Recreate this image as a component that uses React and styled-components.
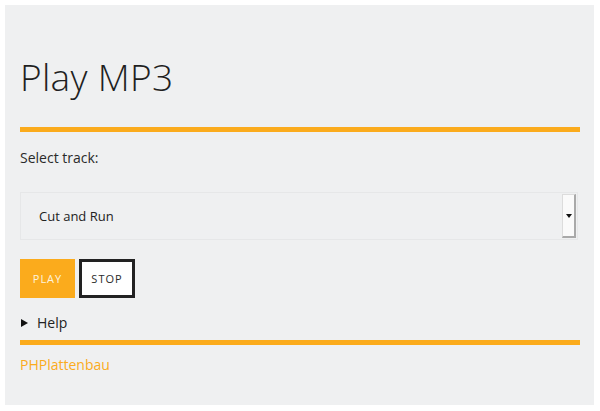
import React from 'react'
import styled, { createGlobalStyle } from 'styled-components'

const GlobalStyle = createGlobalStyle`
body{
  margin: 0;
  background: #ffffff;
  font-family: 'Open Sans', 'Noto Sans', sans-serif;
  color: #222;
}
`

const Page = styled.div`
padding: 5px 6px 6px 5px;
`

const Panel = styled.div`
background: #eff0f1;
height: 400px;
box-sizing: border-box;
padding: 44px 14px 0 15px;
display: flex;
flex-direction: column;
`

const Title = styled.h1`
margin: 0;
font-size: 37px;
font-weight: 300;
line-height: 56px;
color: #1f1f1f;
letter-spacing: 0.3px;
`

const Rule = styled.div`
height: 5px;
background: #fbab1c;
margin-top: ${props => props.top}px;
`

const Label = styled.div`
margin-top: 16px;
font-size: 14px;
line-height: 20px;
color: #2a2a2a;
`

const SelectBox = styled.div`
margin-top: 24px;
margin-right: 2px;
height: 48px;
box-sizing: border-box;
border: 1px solid #e6e7e8;
display: flex;
align-items: center;
padding: 0 1px 0 18px;
`

const SelectText = styled.span`
flex: 1;
font-size: 13px;
color: #222;
`

const ArrowBox = styled.span`
width: 14px;
height: 44px;
box-sizing: border-box;
background: #fafafa;
border: 1px solid #dcdcdc;
border-right: 2px solid #a9a9a9;
border-bottom: 2px solid #a9a9a9;
display: flex;
align-items: center;
justify-content: center;
`

const Arrow = styled.span`
width: 0;
height: 0;
border-left: 3px solid transparent;
border-right: 3px solid transparent;
border-top: 4px solid #111;
`

const Buttons = styled.div`
display: flex;
gap: 4px;
margin-top: 19px;
`

const Button = styled.button`
width: ${props => props.w}px;
height: 39px;
box-sizing: border-box;
font-family: 'Open Sans', sans-serif;
font-size: 11px;
letter-spacing: 1px;
text-transform: uppercase;
cursor: pointer;
padding: 0;
background: ${props => props.primary ? '#fbab1c' : '#ffffff'};
color: ${props => props.primary ? '#fdf3df' : '#2b2b2b'};
border: ${props => props.primary ? 'none' : '3px solid #222'};
`

const Details = styled.details`
margin-top: 14px;
font-size: 14px;
summary{
  cursor: pointer;
  line-height: 22px;
  color: #222;
  list-style: none;
  display: flex;
  align-items: center;
}
summary::-webkit-details-marker{ display: none; }
`

const Tri = styled.span`
width: 0;
height: 0;
border-top: 4px solid transparent;
border-bottom: 4px solid transparent;
border-left: 7px solid #111;
margin: 0 9px 0 1px;
`

const Footer = styled.a`
margin-top: 9px;
font-size: 14px;
line-height: 22px;
color: #fbab1c;
text-decoration: none;
`

export default function App() {
  return (
    <Page>
      <GlobalStyle />
      <Panel>
        <Title>Play MP3</Title>
        <Rule top={22} />
        <Label>Select track:</Label>
        <SelectBox>
          <SelectText>Cut and Run</SelectText>
          <ArrowBox><Arrow /></ArrowBox>
        </SelectBox>
        <Buttons>
          <Button primary w={55}>Play</Button>
          <Button w={56}>Stop</Button>
        </Buttons>
        <Details>
          <summary><Tri />Help</summary>
        </Details>
        <Rule top={6} />
        <Footer href="#">PHPlattenbau</Footer>
      </Panel>
    </Page>
  )
}
